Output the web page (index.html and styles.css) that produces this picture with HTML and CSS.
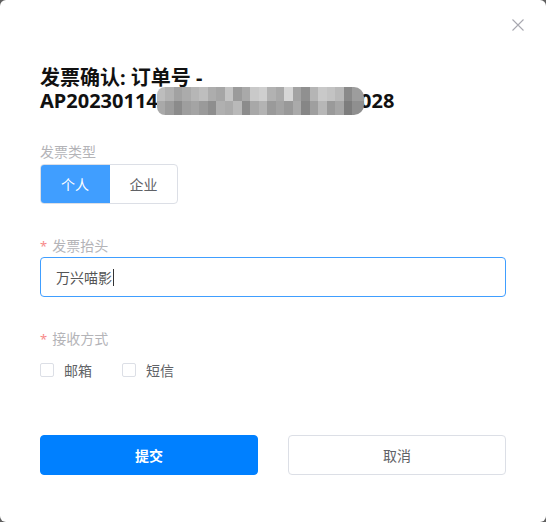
FILE: index.html
```html
<!DOCTYPE html>
<html lang="zh-CN">
<head>
<meta charset="utf-8">
<title>发票确认</title>
<link rel="stylesheet" href="styles.css">
</head>
<body>
<div class="dialog">
  <div class="topbar">
    <button class="close" aria-label="关闭">
      <svg width="12" height="12" viewBox="0 0 12 12"><path d="M0.5 0.5 L11.5 11.5 M11.5 0.5 L0.5 11.5" stroke="#a8a8b0" stroke-width="1.1" fill="none"/></svg>
    </button>
  </div>
  <h1 class="title">发票确认: 订单号 - AP20230114<span class="masked">000000000000000000</span>028</h1>

  <div class="field field-type">
    <div class="label">发票类型</div>
    <div class="segment">
      <div class="seg seg-active">个人</div>
      <div class="seg">企业</div>
    </div>
  </div>

  <div class="field field-head">
    <div class="label"><span class="req">*</span>发票抬头</div>
    <div class="input">万兴喵影<span class="caret"></span></div>
  </div>

  <div class="field field-recv">
    <div class="label"><span class="req">*</span>接收方式</div>
    <div class="checks">
      <label class="check"><span class="box"></span>邮箱</label>
      <label class="check"><span class="box"></span>短信</label>
    </div>
  </div>

  <div class="actions">
    <button class="btn btn-primary">提交</button>
    <button class="btn btn-default">取消</button>
  </div>
</div>
</body>
</html>
```

FILE: styles.css
```css
html, body {
  margin: 0;
  padding: 0;
  background: #5f5f5f;
}
body {
  font-family: "Noto Sans", "Noto Sans CJK SC", sans-serif;
}
.dialog {
  width: 546px;
  height: 522px;
  box-sizing: border-box;
  background: #fff;
  border-radius: 6px;
  padding: 0 40px;
}
.topbar {
  height: 66px;
  display: flex;
  justify-content: flex-end;
  margin-right: -19px;
}
.close {
  margin-top: 18px;
  width: 14px;
  height: 14px;
  padding: 1px;
  border: 0;
  background: none;
  display: flex;
}
.title {
  margin: 0;
  font-size: 20px;
  line-height: 23px;
  font-weight: 700;
  color: #111;
}
.masked {
  position: relative;
  letter-spacing: -0.2px;
  color: transparent;
}
.masked::after {
  content: "";
  position: absolute;
  left: -1px;
  right: -4px;
  top: 0;
  bottom: -1px;
  border-radius: 8px 10px 10px 8px;
  background:
    linear-gradient(to right,
      #bdbdbd 0 8.5px, #b2b2b2 8.5px 17px, #a2a2a2 17px 25.5px, #ababab 25.5px 34px,
      #b6b6b6 34px 42.5px, #bebebe 42.5px 51px, #adadad 51px 59.5px, #a6a6a6 59.5px 68px,
      #c4c4c4 68px 76.5px, #9b9b9b 76.5px 85px, #a9a9a9 85px 93.5px, #c9c9c9 93.5px 102px,
      #cfcfcf 102px 110.5px, #b2b2b2 110.5px 119px, #a9a9a9 119px 127.5px, #d6d6d6 127.5px 136px,
      #a3a3a3 136px 144.5px, #909090 144.5px 153px, #b5b5b5 153px 161.5px, #c9c9c9 161.5px 170px,
      #c3c3c3 170px 178.5px, #b9b9b9 178.5px 187px, #8a8a8a 187px 195.5px, #9d9d9d 195.5px 210px)
      top / 100% 50% no-repeat,
    linear-gradient(to right,
      #a9a9a9 0 8.5px, #9c9c9c 8.5px 17px, #8b8b8b 17px 25.5px, #9e9e9e 25.5px 34px,
      #a4a4a4 34px 42.5px, #9a9a9a 42.5px 51px, #8e8e8e 51px 59.5px, #b0b0b0 59.5px 68px,
      #ababab 68px 76.5px, #b9b9b9 76.5px 85px, #8c8c8c 85px 93.5px, #a8a8a8 93.5px 102px,
      #b3b3b3 102px 110.5px, #9a9a9a 110.5px 119px, #a3a3a3 119px 127.5px, #999 127.5px 136px,
      #aaa 136px 144.5px, #868686 144.5px 153px, #9f9f9f 153px 161.5px, #b7b7b7 161.5px 170px,
      #9a9a9a 170px 178.5px, #a6a6a6 178.5px 187px, #7d7d7d 187px 195.5px, #8f8f8f 195.5px 210px)
      bottom / 100% 50% no-repeat;
}
.label {
  font-size: 14px;
  line-height: 20px;
  color: #b4b4b8;
}
.req {
  color: #f78989;
  margin-right: 5px;
  font-size: 13px;
}
.field-type { margin-top: 30px; }
.field-type .label { margin-bottom: 2px; }
.segment {
  display: flex;
  width: 138px;
  height: 40px;
  box-sizing: border-box;
  border: 1px solid #dcdfe6;
  border-radius: 4px;
  overflow: hidden;
}
.seg {
  display: flex;
  align-items: center;
  justify-content: center;
  font-size: 14px;
  color: #606266;
  flex: 1;
}
.seg-active {
  flex: 0 0 70px;
  background: #409eff;
  color: #fff;
  margin: -1px 0 -1px -1px;
}
.field-head { margin-top: 32px; }
.field-head .label { margin-bottom: 1px; }
.input {
  height: 40px;
  box-sizing: border-box;
  border: 1px solid #409eff;
  border-radius: 4px;
  padding: 0 15px;
  display: flex;
  align-items: center;
  font-size: 14px;
  color: #555;
}
.caret {
  display: inline-block;
  width: 1px;
  height: 17px;
  background: #333;
  margin-left: 1px;
}
.field-recv { margin-top: 32px; }
.checks {
  display: flex;
  gap: 30px;
  margin-top: 11px;
  height: 20px;
  align-items: center;
}
.check {
  display: flex;
  align-items: center;
  gap: 10px;
  font-size: 14px;
  color: #606266;
}
.box {
  width: 14px;
  height: 14px;
  box-sizing: border-box;
  border: 1px solid #dcdfe6;
  border-radius: 2px;
  background: #fff;
}
.actions {
  display: flex;
  justify-content: space-between;
  margin-top: 55px;
}
.btn {
  width: 218px;
  height: 40px;
  border-radius: 4px;
  font-family: "Noto Sans", "Noto Sans CJK SC", sans-serif;
  font-size: 14px;
  cursor: pointer;
}
.btn-primary {
  background: #0080ff;
  border: 1px solid #0080ff;
  color: #fff;
  font-weight: 700;
}
.btn-default {
  background: #fff;
  border: 1px solid #dcdfe6;
  color: #606266;
}
```
